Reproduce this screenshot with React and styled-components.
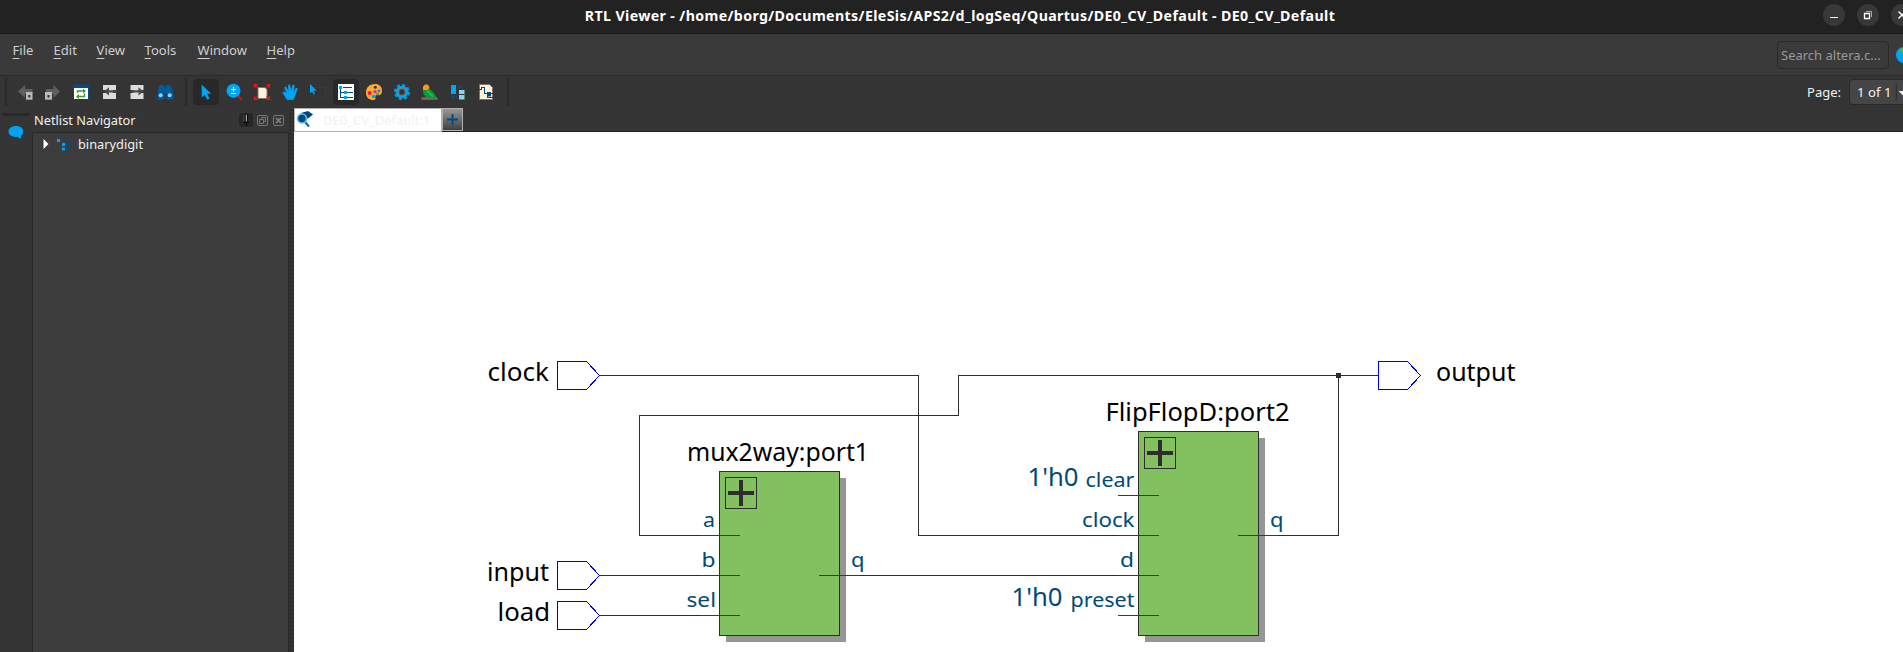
import React from "react";
import styled, { createGlobalStyle } from "styled-components";

const Global = createGlobalStyle`
  html, body { margin: 0; padding: 0; overflow: hidden; background: #353535; }
  * { box-sizing: border-box; }
`;

const sans = `"Noto Sans", "Open Sans", sans-serif`;

const Window = styled.div`
  width: 1903px;
  height: 652px;
  display: flex;
  flex-direction: column;
  overflow: hidden;
  background: #353535;
  color: #f0f0f0;
  font: 13px/18px ${sans};
`;

const TitleBar = styled.header`
  height: 34px;
  flex: none;
  display: grid;
  grid-template-columns: 1fr auto 1fr;
  background: #222;
  border-bottom: 1px solid #191919;
`;

const Title = styled.h1`
  grid-column: 2;
  margin: 0;
  padding: 6px 0 0 17px;
  font: 700 14.2px/20px ${sans};
  letter-spacing: 0.38px;
  color: #fff;
  white-space: nowrap;
`;

const WindowControls = styled.div`
  display: flex;
  justify-content: flex-end;
  gap: 12px;
  padding-top: 4px;
  margin-right: -10px;
`;

const RoundButton = styled.button`
  width: 22px;
  height: 22px;
  flex: none;
  border: 0;
  border-radius: 50%;
  padding: 0;
  background: #383838;
  display: block;
`;

const MenuBar = styled.nav`
  height: 42px;
  flex: none;
  display: flex;
  align-items: flex-start;
  background: #3a3a3a;
  border-bottom: 1px solid #2b2b2b;
`;

const MenuItem = styled.span`
  display: block;
  width: ${(p) => p.$w}px;
  padding-top: 7px;
  color: #cfcfcf;
  white-space: nowrap;
  &::first-letter {
    text-decoration: underline;
    text-underline-offset: 3px;
    text-decoration-thickness: 1px;
  }
`;

const Menus = styled.div`
  display: flex;
  flex: 1;
  padding-left: 12.6px;
`;

const Search = styled.div`
  width: 112px;
  height: 28px;
  margin: 7px 7px 0 0;
  padding: 4px 0 0 3px;
  border: 1px solid #292929;
  border-radius: 4px;
  color: #989898;
  font-size: 13px;
  white-space: nowrap;
`;

const GlobeSlot = styled.div`
  width: 7px;
  height: 20px;
  margin-top: 12px;
  overflow: hidden;
`;

const ToolBar = styled.div`
  height: 32px;
  flex: none;
  display: flex;
  align-items: flex-start;
  background: #343434;
`;

const ToolGroup = styled.div`
  display: flex;
`;

const Tool = styled.div`
  width: 28px;
  height: 32px;
  display: flex;
  align-items: center;
  justify-content: center;
`;

const ToolFace = styled.div`
  width: 26px;
  height: 26px;
  display: flex;
  align-items: center;
  justify-content: center;
  border-radius: 4px;
  background: ${(p) => (p.$active ? "#282828" : "transparent")};
`;

const Separator = styled.div`
  width: 2px;
  height: 28px;
  margin: 2px 5px 0 ${(p) => p.$left}px;
  background: #292929;
`;

const Pager = styled.div`
  margin-left: auto;
  display: flex;
  padding-top: 3px;
  color: #f2f2f2;
`;

const PageLabel = styled.span`
  padding-top: 4px;
  margin-right: 8px;
`;

const PageSelect = styled.div`
  width: 54px;
  height: 26px;
  flex: none;
  display: flex;
  padding: 3px 0 0 7px;
  background: #454545;
  border: 1px solid #292929;
  border-right: 0;
  border-radius: 4px 0 0 4px;
  font-size: 13.2px;
  white-space: nowrap;
`;

const Workspace = styled.main`
  flex: 1;
  display: flex;
  min-height: 0;
`;

const Rail = styled.aside`
  width: 32px;
  flex: none;
  padding: 5px 0 0 2px;
`;

const RailGrip = styled.div`
  width: 28px;
  height: 3px;
  margin-bottom: 9px;
  background: #292929;
`;

const Dock = styled.section`
  width: 257px;
  flex: none;
  display: flex;
  flex-direction: column;
`;

const DockHeader = styled.div`
  height: 24px;
  flex: none;
  display: flex;
  align-items: flex-start;
  padding: 3px 4px 0 2px;
`;

const DockTitle = styled.span`
  flex: 1;
  margin-top: -0.4px;
  font-size: 12.8px;
`;

const TreePanel = styled.div`
  flex: 1;
  border: 1px solid #282828;
  border-bottom: 0;
  background: #3c3c3c;
`;

const TreeRow = styled.div`
  display: flex;
  align-items: center;
  height: 22px;
  padding-left: 10px;
`;

const TreeLabel = styled.span`
  margin-left: 7px;
  font-size: 12.8px;
`;

const Splitter = styled.div`
  width: 5px;
  flex: none;
  background-color: #343434;
  background-image: radial-gradient(circle, #242424 0.8px, transparent 1px);
  background-size: 3px 4px;
`;

const Editor = styled.section`
  flex: 1;
  min-width: 0;
  display: flex;
  flex-direction: column;
`;

const TabStrip = styled.div`
  height: 24px;
  flex: none;
  display: flex;
  border-bottom: 1px solid #241f1f;
`;

const Tab = styled.div`
  width: 148px;
  height: 24px;
  flex: none;
  display: flex;
  border: 1px solid #b3afae;
  background: #fff;
  color: #f1f1f1;
`;

const TabLabel = styled.span`
  margin-left: 10px;
  padding-top: 2px;
`;

const AddTab = styled.button`
  width: 21px;
  height: 23px;
  flex: none;
  padding: 0;
  border: 1px solid #b3afae;
  background: linear-gradient(#989898, #404040);
`;

const Canvas = styled.svg`
  display: block;
  flex: none;
  background: #fff;
  font-family: ${sans};
`;

const Glyph = ({ children, w = 20, h = 20 }) => (
  <svg width={w} height={h} viewBox={`0 0 ${w} ${h}`} display="block">
    {children}
  </svg>
);

const DocArrow = ({ right }) => (
  <Glyph>
    <path d="M3 3h13v5H13v3h3v6H3v-6h3V8H3z" fill="#dcdcdc" transform={right ? "translate(18.5 0) scale(-1 1)" : undefined} />
    <path
      d="M4 9.4l5-4.2v3h8v2.4H9v3z"
      fill="#4a4a4a"
      transform={right ? "translate(19.5 0) scale(-1 1)" : undefined}
    />
  </Glyph>
);

const icons = {
  back: (
    <Glyph>
      <path d="M2 9.500L9 3v4h7.500v5H9v4z" fill="#5f5f5f" />
      <path d="M10 10h6.500v7.700H10z" fill="#bababa" />
      <path d="M12.300 13h2v2.500h-2z" fill="#333" />
    </Glyph>
  ),
  forward: (
    <Glyph>
      <path d="M16 9.500L9.500 3v4H2v5h7.500v4z" fill="#5f5f5f" />
      <path d="M1 10h7v7.700H1z" fill="#bababa" />
      <path d="M3.500 13h2v2.500h-2z" fill="#333" />
    </Glyph>
  ),
  refresh: (
    <Glyph>
      <path d="M1 2.500h16v15H1z" fill="#004a86" />
      <path d="M2 6h14v11H2z" fill="#fff" />
      <path d="M5.500 11V9h6M12.500 11.500v3h-6" fill="none" stroke="#3c9a34" strokeWidth="1.400" />
      <path d="M11 6.500l3 2.500-3 2.500zM7 12l-3 2.500L7 17z" fill="#3c9a34" />
    </Glyph>
  ),
  prev: <DocArrow />,
  next: <DocArrow right />,
  find: (
    <Glyph>
      <path d="M4 3h3.500l1 2h1l1-2H14l1.500 2 2 7.500v3a2 2 0 0 1-2 2h-3a2 2 0 0 1-2-2V12h-2v3.500a2 2 0 0 1-2 2h-3a2 2 0 0 1-2-2v-3L2.800 5z" fill="#005a9e" />
      <circle cx="4.700" cy="13.300" r="2" fill="#8bd3f5" />
      <circle cx="13.700" cy="13.300" r="2" fill="#8bd3f5" />
    </Glyph>
  ),
  pointer: (
    <Glyph>
      <path d="M5.700 2.500v13l3-2.800 2.500 5 2.300-1.200-2.400-4.700h4z" fill="#00a4f4" />
    </Glyph>
  ),
  zoom: (
    <Glyph>
      <path d="M13.500 13.500l4.300 4.300" stroke="#b3191b" strokeWidth="2.600" />
      <circle cx="9.500" cy="8.800" r="7" fill="#00a4f4" />
      <path d="M9.500 5v5M7 7.500h5M7 11.500h5" stroke="#fff" shapeRendering="crispEdges" />
    </Glyph>
  ),
  fit: (
    <Glyph>
      <path d="M6 5.500h7l2 2v9H6z" fill="#fff4dc" stroke="#8b6f66" strokeWidth="1" />
      <path d="M2.500 6V2.500H6M2.500 2.500l3 3M14.500 2.500h3V6M17.500 2.500l-3 3M2.500 14v3.500H6M2.500 17.500l3-3M14.500 17.500h3V14M17.500 17.500l-3-3" fill="none" stroke="#e8151b" strokeWidth="1.200" />
    </Glyph>
  ),
  hand: (
    <Glyph>
      <path d="M7 17.500L5 14 2.700 10.700l1-1L7 11.500 4.500 5.500l1.300-.6 3 5L8.300 3h1.500l1.400 6.500L12.800 3l1.400.3-.5 7 2.500-4.300 1.200.7-2.200 6-1.200 3-.5 1.800z" fill="#00a4f4" stroke="#00a4f4" strokeWidth=".7" />
    </Glyph>
  ),
  select: (
    <Glyph>
      <path d="M5.500 5.500H17.500V15.500H5.500z" fill="none" stroke="#00508f" strokeDasharray="1 1" />
      <path d="M2 2v9.500l2-2 1.600 3 1.400-.8-1.500-3h3.200z" fill="#00a4f4" />
    </Glyph>
  ),
  tree: (
    <Glyph>
      <path d="M2 2h16v16H2z" fill="#fff" />
      <path d="M4.500 6v9.500H17M4.500 10.500H17M7 5.500h9" fill="none" stroke="#004a86" shapeRendering="crispEdges" />
      <path d="M3 4h3v3H3zM8 9h3v3H8zM8 14h3v3H8z" fill="#00a4f4" />
    </Glyph>
  ),
  palette: (
    <Glyph>
      <path d="M11 2C5.500 2 2 5.500 2 10.500S5 18 9.500 18c2.500 0 2-2 1.800-3.300-.2-1.500 1.500-2 3-1.700C17 13.500 18 11 18 8.500 18 4.500 15 2 11 2z" fill="#ffab2d" />
      <circle cx="11.300" cy="5.200" r="1.500" fill="#353535" />
      <circle cx="5.700" cy="11" r="2" fill="#f0145a" />
      <circle cx="9.500" cy="14.500" r="1.800" fill="#00a4f4" />
      <circle cx="11" cy="9.700" r="1.600" fill="#a53ec5" />
      <circle cx="15" cy="9" r="1.400" fill="#5b60e8" />
      <circle cx="13.500" cy="12" r="1.500" fill="#4aa83c" />
    </Glyph>
  ),
  gear: (
    <Glyph>
      <circle cx="10" cy="10" r="6.800" fill="none" stroke="#0099e5" strokeWidth="2.500" strokeDasharray="3.100 2.240" />
      <circle cx="10" cy="10" r="4.800" fill="#353535" stroke="#00a4f4" strokeWidth="3" />
      <circle cx="10" cy="10" r="3.300" fill="none" stroke="#8b6f4a" strokeWidth="1.200" />
    </Glyph>
  ),
  bird: (
    <Glyph>
      <path d="M1.500 15.200h16v2.600h-16z" fill="#806760" />
      <path d="M3 7.500L8.500 6l5 4.500 4.500 7-7-2-5-.5-2.700-3z" fill="#0a9b35" />
      <path d="M3 8V4.800L5 2.500h2.500l2 2.300-.5 2L6.500 8z" fill="#ff9a16" />
      <path d="M7 8.500l6 6" stroke="#20c957" strokeWidth="1.300" />
    </Glyph>
  ),
  swap: (
    <Glyph>
      <path d="M3 3h5v9H3z" fill="#00a4f4" />
      <path d="M11 8h5.500v9.500H11z" fill="#8bd3f5" />
      <path d="M11 12.500h5.500" stroke="#353535" />
      <path d="M10 4.500h3.500V7M4.500 13v2.500H9" fill="none" stroke="#005a9e" strokeWidth="1.300" strokeDasharray="2 1" />
    </Glyph>
  ),
  page: (
    <Glyph>
      <path d="M3.500 2.500h10l3 3v12h-13z" fill="#fff4dc" stroke="#8b6f66" />
      <path d="M3 7.500h2v-2h3v6h8.500M11.500 12v3H17" fill="none" stroke="#004a86" shapeRendering="crispEdges" />
      <path d="M11 10h4v4.500h-4z" fill="#004a86" />
    </Glyph>
  ),
};

const MENUS = [
  ["File", 41], ["Edit", 43], ["View", 48], ["Tools", 53], ["Window", 69], ["Help", 50],
];
const NAV_TOOLS = ["back", "forward", "refresh", "prev", "next", "find"];
const VIEW_TOOLS = ["pointer", "zoom", "fit", "hand", "select", "tree", "palette", "gear", "bird", "swap", "page"];
const ACTIVE = new Set(["pointer", "tree"]);

const Tools = ({ names }) => (
  <ToolGroup>
    {names.map((n) => (
      <Tool key={n}>
        <ToolFace $active={ACTIVE.has(n)}>{icons[n]}</ToolFace>
      </Tool>
    ))}
  </ToolGroup>
);

const INK = "#2d2d2d";
const PIN = "#004a77";

const Port = ({ x, y, w = 29, tip = 42 }) => (
  <path
    d={`M${x} ${y - 14}h${w}L${x + tip} ${y}L${x + w} ${y + 14}h${-w}z`}
    fill="#fff"
    stroke="#0000e0"
    shapeRendering="crispEdges"
  />
);

const Label = ({ x, y, w, size = 24.5, color = "#000", children }) => (
  <text x={x} y={y} fontSize={size} fill={color} textLength={w} lengthAdjust="spacingAndGlyphs">
    {children}
  </text>
);

const Block = ({ x, y, h }) => (
  <g shapeRendering="crispEdges">
    <rect x={x + 6.5} y={y + 6.5} width="120" height={h} fill="#969696" />
    <rect x={x} y={y} width="120" height={h} fill="#82c060" stroke={INK} />
    <rect x={x + 6} y={y + 6} width="31" height="31" fill="none" stroke={INK} />
    <path d={`M${x + 8.5} ${y + 21.5}h26M${x + 21.5} ${y + 8.5}v26`} stroke={INK} strokeWidth="4" />
  </g>
);

const Schematic = () => (
  <Canvas width="1609" height="520" viewBox="294 132 1609 520">
    <Block x={719.5} y={471.5} h={164} />
    <Block x={1138.5} y={431.5} h={204} />
    <g fill="none" stroke={INK} shapeRendering="crispEdges">
      <path d="M599 375.500H918.500V535.500H1118" />
      <path d="M700 535.500H639.500V415.500H958.500V375.500H1378" />
      <path d="M599 575.500H700M599 615.500H700M859 575.500H1118M1278 535.500H1338.500V375.500" />
    </g>
    <rect x="1336" y="373" width="5" height="5" fill={INK} />
    <path
      d="M700 535.500h40M700 575.500h40M700 615.500h40M819 575.500h40M1118 495.500h41M1118 535.500h41M1118 575.500h41M1118 615.500h41M1238 535.500h40"
      stroke={PIN}
      shapeRendering="crispEdges"
    />
    <Port x={557.5} y={375.5} />
    <Port x={557.5} y={575.5} />
    <Port x={557.5} y={615.5} />
    <Port x={1378.5} y={375.5} />
    <Label x={487.5} y={381} w={61.5}>clock</Label>
    <Label x={487} y={581} w={62}>input</Label>
    <Label x={497.5} y={621} w={52.5}>load</Label>
    <Label x={687} y={460.5} w={182}>mux2way:port1</Label>
    <Label x={1105.5} y={420.5} w={184}>FlipFlopD:port2</Label>
    <Label x={1436} y={381} w={79.5}>output</Label>
    <Label x={1027.5} y={486} w={51} color={PIN}>1'h0</Label>
    <Label x={1011.5} y={606} w={51} color={PIN}>1'h0</Label>
    <Label x={703} y={527} w={12} size={20.5} color={PIN}>a</Label>
    <Label x={701.5} y={567} w={14} size={20.5} color={PIN}>b</Label>
    <Label x={686.5} y={607} w={29.5} size={20.5} color={PIN}>sel</Label>
    <Label x={851} y={567} w={13.5} size={20.5} color={PIN}>q</Label>
    <Label x={1085.5} y={487} w={49} size={20.5} color={PIN}>clear</Label>
    <Label x={1082} y={527} w={52.500} size={20.5} color={PIN}>clock</Label>
    <Label x={1120} y={567} w={14} size={20.5} color={PIN}>d</Label>
    <Label x={1070.5} y={607} w={64} size={20.5} color={PIN}>preset</Label>
    <Label x={1270} y={527} w={13.5} size={20.5} color={PIN}>q</Label>
  </Canvas>
);

export default function App() {
  return (
    <Window>
      <Global />
      <TitleBar>
        <Title>
          RTL Viewer - /home/borg/Documents/EleSis/APS2/d_logSeq/Quartus/DE0_CV_Default - DE0_CV_Default
        </Title>
        <WindowControls>
          <RoundButton>
            <Glyph w={22} h={22}><path d="M7 13.500h8" stroke="#fff" /></Glyph>
          </RoundButton>
          <RoundButton>
            <Glyph w={22} h={22}>
              <path d="M9 7.500h5.500V13" fill="none" stroke="#aaa" />
              <path d="M7.500 9.500h5v5h-5z" fill="none" stroke="#fff" strokeWidth="1.300" />
            </Glyph>
          </RoundButton>
          <RoundButton>
            <Glyph w={22} h={22}><path d="M7.500 7.500l7 7m0-7l-7 7" stroke="#fff" strokeWidth="1.400" /></Glyph>
          </RoundButton>
        </WindowControls>
      </TitleBar>
      <MenuBar>
        <Menus>
          {MENUS.map(([name, w]) => <MenuItem key={name} $w={w}>{name}</MenuItem>)}
        </Menus>
        <Search>Search altera.c...</Search>
        <GlobeSlot>
          <Glyph w={16} h={18}>
            <circle cx="8" cy="9" r="8" fill="#00a4f4" />
            <path d="M3.500 4L7 1.500V7L5 6.500z" fill="#56b82c" />
          </Glyph>
        </GlobeSlot>
      </MenuBar>
      <ToolBar>
        <Separator $left={5} />
        <Tools names={NAV_TOOLS} />
        <Separator $left={5} />
        <Tools names={VIEW_TOOLS} />
        <Separator $left={7} />
        <Pager>
          <PageLabel>Page:</PageLabel>
          <PageSelect>
            1 of 1
            <svg width="12" height="20" viewBox="0 0 12 20">
              <path d="M5.500 1v17" stroke="#292929" />
              <path d="M8 8h10l-5 5z" fill="#fff" />
            </svg>
          </PageSelect>
        </Pager>
      </ToolBar>
      <Workspace>
        <Rail>
          <RailGrip />
          <svg width="28" height="16" viewBox="0 0 28 16">
            <path d="M14 1c4.500 0 7.300 2.300 7.300 5.500 0 2-.8 3.300-2.200 4.300l-.5 3.200-3-2.200C10 12.500 6.500 10 6.500 6.500 6.500 3.300 9.500 1 14 1z" fill="#00a4f4" />
          </svg>
        </Rail>
        <Dock>
          <DockHeader>
            <DockTitle>Netlist Navigator</DockTitle>
            <svg width="46" height="16" viewBox="0 0 46 16">
              <rect x="0" y="2" width="14" height="14" rx="3" fill="#272727" />
              <path d="M4.500 4v7" stroke="#3c4650" />
              <path d="M7.500 4v6" stroke="#b5b5b5" />
              <path d="M8.500 4v6M4 11.500h6M7.500 12v3" fill="none" stroke="#000" />
              <g fill="none" stroke="#777">
                <rect x="18.500" y="4.500" width="10" height="10" rx="1.500" />
                <path d="M20.500 8.500h4v4h-4zM22.500 8V6.500h4v4H25" />
                <rect x="34.500" y="4.500" width="10" height="10" rx="1.500" />
                <path d="M37 7l5 5m0-5l-5 5" strokeWidth="1.800" />
              </g>
            </svg>
          </DockHeader>
          <TreePanel>
            <TreeRow>
              <svg width="28" height="16" viewBox="0 0 28 16">
                <path d="M0.500 3l5 5-5 5z" fill="#fff" />
                <path d="M16.500 5v8.500h4M19 8.500h9M22 4.500h4M22 12.500h6" fill="none" stroke="#00508f" strokeDasharray="2 1" />
                <path d="M14 3h3v3h-3zM19 7h3v3h-3zM19 11.500h3v3h-3z" fill="#00a4f4" />
              </svg>
              <TreeLabel>binarydigit</TreeLabel>
            </TreeRow>
          </TreePanel>
        </Dock>
        <Splitter />
        <Editor>
          <TabStrip>
            <Tab>
              <svg width="18" height="20" viewBox="0 0 18 20">
                <path d="M6 4l7-2 5 3.500-5 4-5-1z" fill="#00467f" />
                <path d="M10 13l4 4.500" stroke="#0067aa" strokeWidth="2" />
                <circle cx="7" cy="9.500" r="4.500" fill="#00467f" stroke="#62c4ed" strokeWidth="1.600" />
              </svg>
              <TabLabel>DE0_CV_Default:1</TabLabel>
            </Tab>
            <AddTab>
              <Glyph w={19} h={21}><path d="M9.500 5v11M4 10.500h11" stroke="#004a86" strokeWidth="2" /></Glyph>
            </AddTab>
          </TabStrip>
          <Schematic />
        </Editor>
      </Workspace>
    </Window>
  );
}
